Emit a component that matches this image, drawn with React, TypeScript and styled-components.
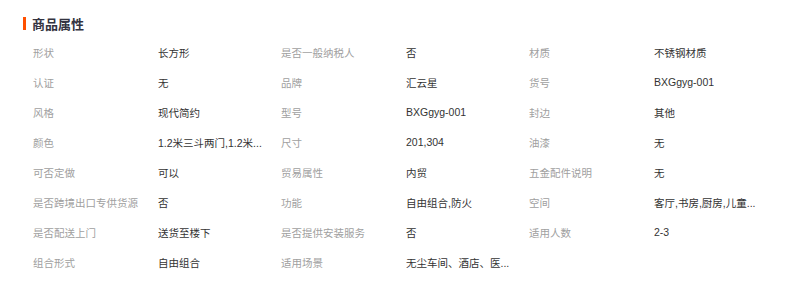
import React from "react";
import styled, { createGlobalStyle } from "styled-components";

const Global = createGlobalStyle`
  html, body { margin: 0; padding: 0; background: #fff; }
  body { font-family: "Liberation Sans", "Noto Sans CJK SC", sans-serif; }
`;

const Page = styled.div`
  width: 800px;
  height: 282px;
  padding: 13px 0 0 23px;
  box-sizing: border-box;
  overflow: hidden;
`;

const Title = styled.h2`
  display: flex;
  align-items: center;
  gap: 6px;
  margin: 0;
  height: 20px;
  font-size: 13px;
  font-weight: bold;
  color: #333340;
  font-family: "Noto Sans CJK SC", sans-serif;
  &::before {
    content: "";
    width: 3px;
    height: 13px;
    background: #ff5000;
  }
`;

const Grid = styled.div`
  display: grid;
  grid-template-columns: repeat(3, 125px 123px);
  grid-auto-rows: 30px;
  margin-top: 4px;
  padding-left: 10px;
`;

const Cell = styled.div<{ $label?: boolean }>`
  display: flex;
  align-items: center;
  font-size: 10.5px;
  color: ${(p) => (p.$label ? "#a0a0a0" : "#333")};
  min-width: 0;
`;

const Text = styled.span`
  display: block;
  max-width: 115px;
  white-space: nowrap;
  overflow: hidden;
  text-overflow: ellipsis;
`;

const items: [string, string][] = [
  ["形状", "长方形"],
  ["是否一般纳税人", "否"],
  ["材质", "不锈钢材质"],
  ["认证", "无"],
  ["品牌", "汇云星"],
  ["货号", "BXGgyg-001"],
  ["风格", "现代简约"],
  ["型号", "BXGgyg-001"],
  ["封边", "其他"],
  ["颜色", "1.2米三斗两门,1.2米..."],
  ["尺寸", "201,304"],
  ["油漆", "无"],
  ["可否定做", "可以"],
  ["贸易属性", "内贸"],
  ["五金配件说明", "无"],
  ["是否跨境出口专供货源", "否"],
  ["功能", "自由组合,防火"],
  ["空间", "客厅,书房,厨房,儿童..."],
  ["是否配送上门", "送货至楼下"],
  ["是否提供安装服务", "否"],
  ["适用人数", "2-3"],
  ["组合形式", "自由组合"],
  ["适用场景", "无尘车间、酒店、医..."],
];

export default function App() {
  return (
    <Page>
      <Global />
      <Title>商品属性</Title>
      <Grid>
        {items.map(([k, v]) => (
          <React.Fragment key={k}>
            <Cell $label>{k}</Cell>
            <Cell>
              <Text>{v}</Text>
            </Cell>
          </React.Fragment>
        ))}
      </Grid>
    </Page>
  );
}
